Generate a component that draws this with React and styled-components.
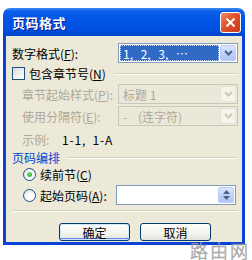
import React from 'react';
import styled, { createGlobalStyle } from 'styled-components';

const GlobalStyle = createGlobalStyle`
  body {
    margin: 0;
    background: #fff;
    font-family: "Noto Sans CJK SC", "Liberation Sans", sans-serif;
    font-size: 12px;
    color: #000;
  }
`;

const Page = styled.div`
  position: relative;
  width: 252px;
  height: 260px;
  padding: 8px 0 0 3px;
  box-sizing: border-box;
`;

const Window = styled.div`
  width: 242px;
  height: 237px;
  display: flex;
  flex-direction: column;
`;

const TitleBar = styled.div`
  height: 28px;
  flex: none;
  display: flex;
  align-items: center;
  justify-content: space-between;
  padding: 0 4px 0 9px;
  border-radius: 7px 7px 0 0;
  background: linear-gradient(
    #3d8cf5 0%,
    #0a5ee9 12%,
    #0055e5 45%,
    #004fe0 80%,
    #0044c8 100%
  );
`;

const Title = styled.span`
  color: #fff;
  font-weight: bold;
  font-size: 13px;
  letter-spacing: 0.5px;
  text-shadow: 1px 1px 0 #0a1e8c;
`;

const CloseButton = styled.div`
  width: 19px;
  height: 19px;
  border: 1px solid #fff;
  border-radius: 3px;
  background: linear-gradient(135deg, #f08a6a 0%, #e0532c 45%, #c8391a 100%);
  display: flex;
  align-items: center;
  justify-content: center;
`;

const Frame = styled.div`
  flex: 1;
  border: 3px solid #0842d6;
  border-top: 0;
  background: #ece9d8;
  padding: 7px 4px 0 6px;
  display: flex;
  flex-direction: column;
`;

const Row = styled.div`
  display: flex;
  align-items: center;
  height: ${(p) => p.$h || 20}px;
  margin-top: ${(p) => p.$mt || 0}px;
  padding-left: ${(p) => p.$indent || 0}px;
`;

const Label = styled.span`
  width: ${(p) => p.$w}px;
  flex: none;
  white-space: nowrap;
  color: ${(p) => (p.$disabled ? '#aca899' : '#000')};
`;

const Key = styled.span`
  text-decoration: underline;
`;

const Select = styled.div`
  width: 120px;
  height: 20px;
  box-sizing: border-box;
  border: 1px solid ${(p) => (p.$disabled ? '#c9c7ba' : '#7f9db9')};
  background: ${(p) => (p.$disabled ? '#ebe8d9' : '#fff')};
  display: flex;
  align-items: stretch;
  padding: 1px;
`;

const Value = styled.div`
  flex: 1;
  display: flex;
  align-items: center;
  padding-left: 3px;
  white-space: pre;
  word-spacing: ${(p) => (p.$selected ? 5 : 0)}px;
  color: ${(p) => (p.$disabled ? '#aca899' : '#fff')};
  background: ${(p) => (p.$selected ? '#316ac5' : 'transparent')};
  outline: ${(p) => (p.$selected ? '1px dotted #c9d6f0' : 'none')};
  outline-offset: -1px;
  margin-right: 1px;
`;

const DropButton = styled.div`
  width: 16px;
  flex: none;
  border-radius: 2px;
  display: flex;
  align-items: center;
  justify-content: center;
  background: ${(p) =>
    p.$disabled
      ? '#f5f4ea'
      : 'linear-gradient(#dbe6fd, #bccffa 60%, #b1c6f7)'};
  border: 1px solid ${(p) => (p.$disabled ? '#e8e6dc' : '#b9cdf8')};
  box-sizing: border-box;
`;

const SpinButton = styled(DropButton)`
  flex-direction: column;
  gap: 2px;
`;

const Line = styled.div`
  flex: 1;
  height: 0;
  border-top: 1px solid #d0d0bf;
  border-bottom: 1px solid #fff;
  margin-left: ${(p) => p.$ml || 0}px;
`;

const CheckBox = styled.span`
  width: 11px;
  height: 11px;
  flex: none;
  border: 1px solid #1c5180;
  background: linear-gradient(135deg, #dcdcd7, #fff);
  margin-right: 4px;
`;

const Radio = styled.span`
  width: 11px;
  height: 11px;
  flex: none;
  border: 1px solid #1c5180;
  border-radius: 50%;
  background: radial-gradient(circle at 65% 65%, #fff 30%, #dcdcd7 100%);
  margin-right: 4px;
  display: flex;
  align-items: center;
  justify-content: center;

  &::after {
    content: '';
    display: ${(p) => (p.$checked ? 'block' : 'none')};
    width: 5px;
    height: 5px;
    border-radius: 50%;
    background: radial-gradient(circle at 35% 35%, #6ee06e, #21a121);
  }
`;

const GroupTitle = styled.span`
  color: #0046d5;
  flex: none;
`;

const Sample = styled.span`
  margin-left: 4px;
  letter-spacing: 0.8px;
  word-spacing: 3px;
`;

const ButtonBar = styled.div`
  display: flex;
  justify-content: center;
  gap: 10px;
  margin-top: 11px;
  padding-left: 20px;
`;

const Button = styled.div`
  width: 71px;
  height: 18px;
  box-sizing: border-box;
  border: 1px solid #003c74;
  border-radius: 3px;
  background: linear-gradient(#fff, #f4f3ee 60%, #e3e2da);
  box-shadow: ${(p) =>
    p.$default ? 'inset 0 0 0 1px #cee7ff, inset 0 -1px 0 1px #6982ee' : 'none'};
  display: flex;
  align-items: center;
  justify-content: center;
`;

const Watermark = styled.span`
  position: absolute;
  right: 2px;
  bottom: 0;
  font-size: 18px;
  line-height: 20px;
  letter-spacing: 2px;
  color: transparent;
  -webkit-text-stroke: 0.6px #9a9a9a;
  font-weight: 300;
`;

const Chevron = ({ disabled }) => (
  <svg width="9" height="6" viewBox="0 0 9 6">
    <path
      d="M1 1 L4.5 4.5 L8 1"
      fill="none"
      stroke={disabled ? '#c9c7ba' : '#4d6185'}
      strokeWidth="2"
    />
  </svg>
);

const Tri = ({ up }) => (
  <svg width="7" height="4" viewBox="0 0 7 4">
    <path d={up ? 'M0 4 L3.5 0 L7 4 Z' : 'M0 0 L3.5 4 L7 0 Z'} fill="#4d6185" />
  </svg>
);

const App = () => (
  <Page>
    <GlobalStyle />
    <Window>
      <TitleBar>
        <Title>页码格式</Title>
        <CloseButton>
          <svg width="11" height="11" viewBox="0 0 11 11">
            <path d="M1.5 1.5 L9.5 9.5 M9.5 1.5 L1.5 9.5" stroke="#fff" strokeWidth="2" />
          </svg>
        </CloseButton>
      </TitleBar>
      <Frame>
        <Row>
          <Label $w={106}>
            数字格式(<Key>F</Key>):
          </Label>
          <Select>
            <Value $selected>1, 2, 3, …</Value>
            <DropButton>
              <Chevron />
            </DropButton>
          </Select>
        </Row>
        <Row $h={21}>
          <CheckBox />
          <span>
            包含章节号(<Key>N</Key>)
          </span>
          <Line $ml={8} />
        </Row>
        <Row $indent={10}>
          <Label $w={96} $disabled>
            章节起始样式(<Key>P</Key>):
          </Label>
          <Select $disabled>
            <Value $disabled>标题 1</Value>
            <DropButton $disabled>
              <Chevron disabled />
            </DropButton>
          </Select>
        </Row>
        <Row $indent={10} $mt={2}>
          <Label $w={96} $disabled>
            使用分隔符(<Key>E</Key>):
          </Label>
          <Select $disabled>
            <Value $disabled>-    (连字符)</Value>
            <DropButton $disabled>
              <Chevron disabled />
            </DropButton>
          </Select>
        </Row>
        <Row $indent={10} $mt={5} $h={17}>
          <Label $w={36} $disabled>
            示例:
          </Label>
          <Sample>1-1, 1-A</Sample>
        </Row>
        <Row $mt={1} $h={17}>
          <GroupTitle>页码编排</GroupTitle>
          <Line $ml={6} />
        </Row>
        <Row $indent={11} $h={16}>
          <Radio $checked />
          <span>
            续前节(<Key>C</Key>)
          </span>
        </Row>
        <Row $indent={11} $mt={3}>
          <Radio />
          <Label $w={76}>
            起始页码(<Key>A</Key>):
          </Label>
          <Select>
            <Value />
            <SpinButton>
              <Tri up />
              <Tri />
            </SpinButton>
          </Select>
        </Row>
        <Row $mt={5} $h={2}>
          <Line />
        </Row>
        <ButtonBar>
          <Button $default>确定</Button>
          <Button>取消</Button>
        </ButtonBar>
      </Frame>
    </Window>
    <Watermark>路由网</Watermark>
  </Page>
);

export default App;
